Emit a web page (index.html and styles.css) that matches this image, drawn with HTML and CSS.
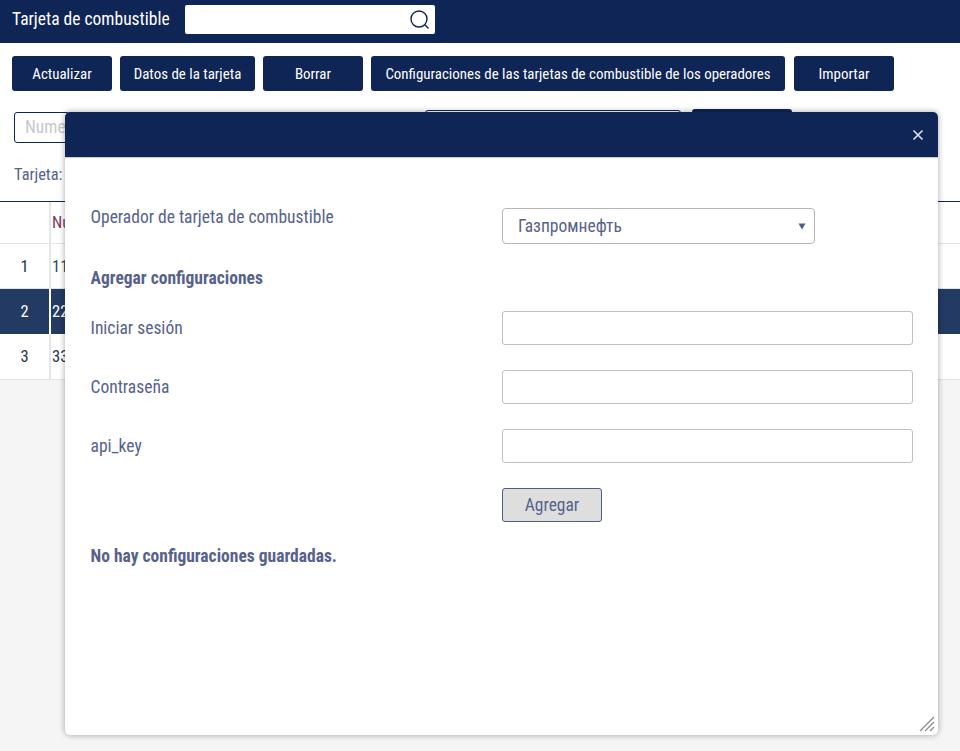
FILE: index.html
```html
<!DOCTYPE html>
<html lang="es">
<head>
<meta charset="utf-8">
<title>Tarjeta de combustible</title>
<link rel="stylesheet" href="styles.css">
</head>
<body>
<header class="topbar">
  <span class="title">Tarjeta de combustible</span>
  <div class="search">
    <svg class="search-icon" width="22" height="22" viewBox="0 0 22 22"><circle cx="10" cy="10" r="8" fill="none" stroke="#0f2555" stroke-width="1.4"/><path d="M15.8 15.8L19.5 19.5" stroke="#0f2555" stroke-width="1.4" fill="none"/></svg>
  </div>
</header>
<main class="page">
  <div class="panel">
    <div class="toolbar">
      <button class="btn w100">Actualizar</button>
      <button class="btn w135">Datos de la tarjeta</button>
      <button class="btn w100">Borrar</button>
      <button class="btn w414">Configuraciones de las tarjetas de combustible de los operadores</button>
      <button class="btn w100 gap-extra">Importar</button>
    </div>
    <div class="filters">
      <div class="filter-input">Numero</div>
      <div class="filter-wide"></div>
      <div class="filter-btn"></div>
    </div>
    <div class="card-label">Tarjeta:</div>
    <div class="table">
      <div class="row head"><div class="c1"></div><div class="c2 head-text">Numero</div></div>
      <div class="row"><div class="c1">1</div><div class="c2 teal">111</div></div>
      <div class="row selected"><div class="c1">2</div><div class="c2">222</div></div>
      <div class="row last"><div class="c1">3</div><div class="c2">333</div></div>
    </div>
  </div>
</main>
<section class="modal">
  <div class="modal-head">
    <svg class="close" width="12" height="12" viewBox="0 0 12 12"><path d="M1.5 1.5L10.5 10.5M10.5 1.5L1.5 10.5" stroke="#dfe2ea" stroke-width="1.6" fill="none"/></svg>
  </div>
  <div class="modal-body">
    <div class="form-row first">
      <label class="label">Operador de tarjeta de combustible</label>
      <div class="select"><span>Газпромнефть</span><svg class="caret" width="8" height="7" viewBox="0 0 8 7"><path d="M0.5 0.5H7.5L4 6.5Z" fill="#4f5d88"/></svg></div>
    </div>
    <h3 class="section-title">Agregar configuraciones</h3>
    <div class="form-row"><label class="label">Iniciar sesión</label><div class="field"></div></div>
    <div class="form-row"><label class="label">Contraseña</label><div class="field"></div></div>
    <div class="form-row"><label class="label">api_key</label><div class="field"></div></div>
    <div class="form-row action"><span class="label"></span><button class="add">Agregar</button></div>
    <h3 class="section-title empty">No hay configuraciones guardadas.</h3>
  </div>
  <svg class="grip" width="16" height="16" viewBox="0 0 16 16"><path d="M1 15L15 1M6 15L15 6M11 15L15 11" stroke="#8a8a8a" stroke-width="1.3" fill="none"/></svg>
</section>
</body>
</html>
```
FILE: styles.css
```css
* { box-sizing: border-box; }
html, body { margin: 0; padding: 0; }
body { width: 960px; height: 751px; overflow: hidden; background: #f5f5f5; font-family: Roboto, sans-serif; font-stretch: 75%; color: #56628a; position: relative; }
.topbar { height: 43px; background: #0f2555; display: flex; align-items: center; padding: 0 12px; }
.title { color: #fff; font-size: 17.5px; font-weight: 450; width: 173px; white-space: nowrap; margin-top: -5px; }
.search { width: 250px; height: 29px; margin-top: -4px; background: #fff; border-radius: 2px; display: flex; justify-content: flex-end; align-items: center; padding-right: 4px; }
.panel { background: #fff; height: 337px; }
.toolbar { display: flex; gap: 8px; padding: 13px 12px 0; }
.btn { height: 35px; background: #0f2555; color: #fff; border: 0; border-radius: 3px; font: inherit; font-stretch: 75%; font-size: 14.95px; font-weight: 450; padding: 0; white-space: nowrap; }
.w100 { width: 100px; }
.w135 { width: 135px; }
.w414 { width: 414px; }
.gap-extra { margin-left: 1px; }
.filters { display: flex; padding: 18px 0 0 14px; height: 62px; }
.filter-input { width: 300px; height: 31px; margin-top: 3px; border: 1px solid #0f2555; border-radius: 3px; color: #c8c8c8; font-size: 17.5px; padding: 4px 10px; }
.filter-wide { width: 256px; height: 31px; margin-left: 111px; margin-top: 1px; border: 1px solid #0f2555; border-radius: 3px; }
.filter-btn { width: 100px; height: 31px; margin-left: 11px; background: #0f2555; border-radius: 3px; }
.card-label { font-size: 16.4px; padding-left: 14px; height: 48px; padding-top: 12px; }
.table { border-top: 1px solid #0f2555; }
.row { display: flex; height: 45px; border-bottom: 1px solid #e3e3e3; color: #24324f; font-size: 16.5px; align-items: stretch; }
.row.head { height: 42px; }
.row.last { height: 46px; }
.row.selected { border-bottom: 0; color: #fff; }
.c1 { width: 51px; border-right: 2px solid #e6e6e6; display: flex; align-items: center; justify-content: center; }
.c2 { padding-left: 1px; display: flex; align-items: center; white-space: nowrap; }
.head-text { color: #7d3c5c; }
.teal { color: #2c4a5e; }
.selected { background: #233a63; }
.selected .c1 { border-right-color: #fff; }
.modal { position: absolute; left: 65px; top: 112px; width: 873px; height: 623px; background: #fff; border-radius: 5px; box-shadow: 0 0 6px rgba(0,0,0,.35); overflow: hidden; }
.modal-head { height: 46px; background: #0f2555; display: flex; align-items: center; justify-content: flex-end; padding-right: 14px; border-bottom: 1px solid #c8ccd4; }
.modal-body { padding: 0 25px 0 25.5px; }
.form-row { display: flex; height: 59px; align-items: flex-start; }
.form-row.first { margin-top: 50px; min-height: 36px; height: 36px; }
.label { width: 411.5px; font-size: 17.5px; padding-top: 7px; flex: none; line-height: 20px; }
.first .label { padding-top: 0; margin-top: -1px; }
.select { width: 313px; height: 36px; border: 1px solid #b5b5b5; border-radius: 4px; display: flex; align-items: center; justify-content: space-between; padding: 0 8px 0 15px; font-size: 17.5px; }
.field { width: 411px; height: 34px; border: 1px solid #c0c0c0; border-radius: 3px; }
.section-title { margin: 0; font-size: 17.5px; font-weight: 700; }
.section-title:not(.empty) { margin: 24px 0 22px; line-height: 21px; }
.add { width: 100px; height: 34px; background: #dedede; border: 1px solid #4f5d88; border-radius: 3px; color: #56628a; font: inherit; font-stretch: 75%; font-size: 17.5px; padding: 0; }
.empty { line-height: 21px; margin-top: -1px; }
.grip { position: absolute; right: 3px; bottom: 3px; }
```
